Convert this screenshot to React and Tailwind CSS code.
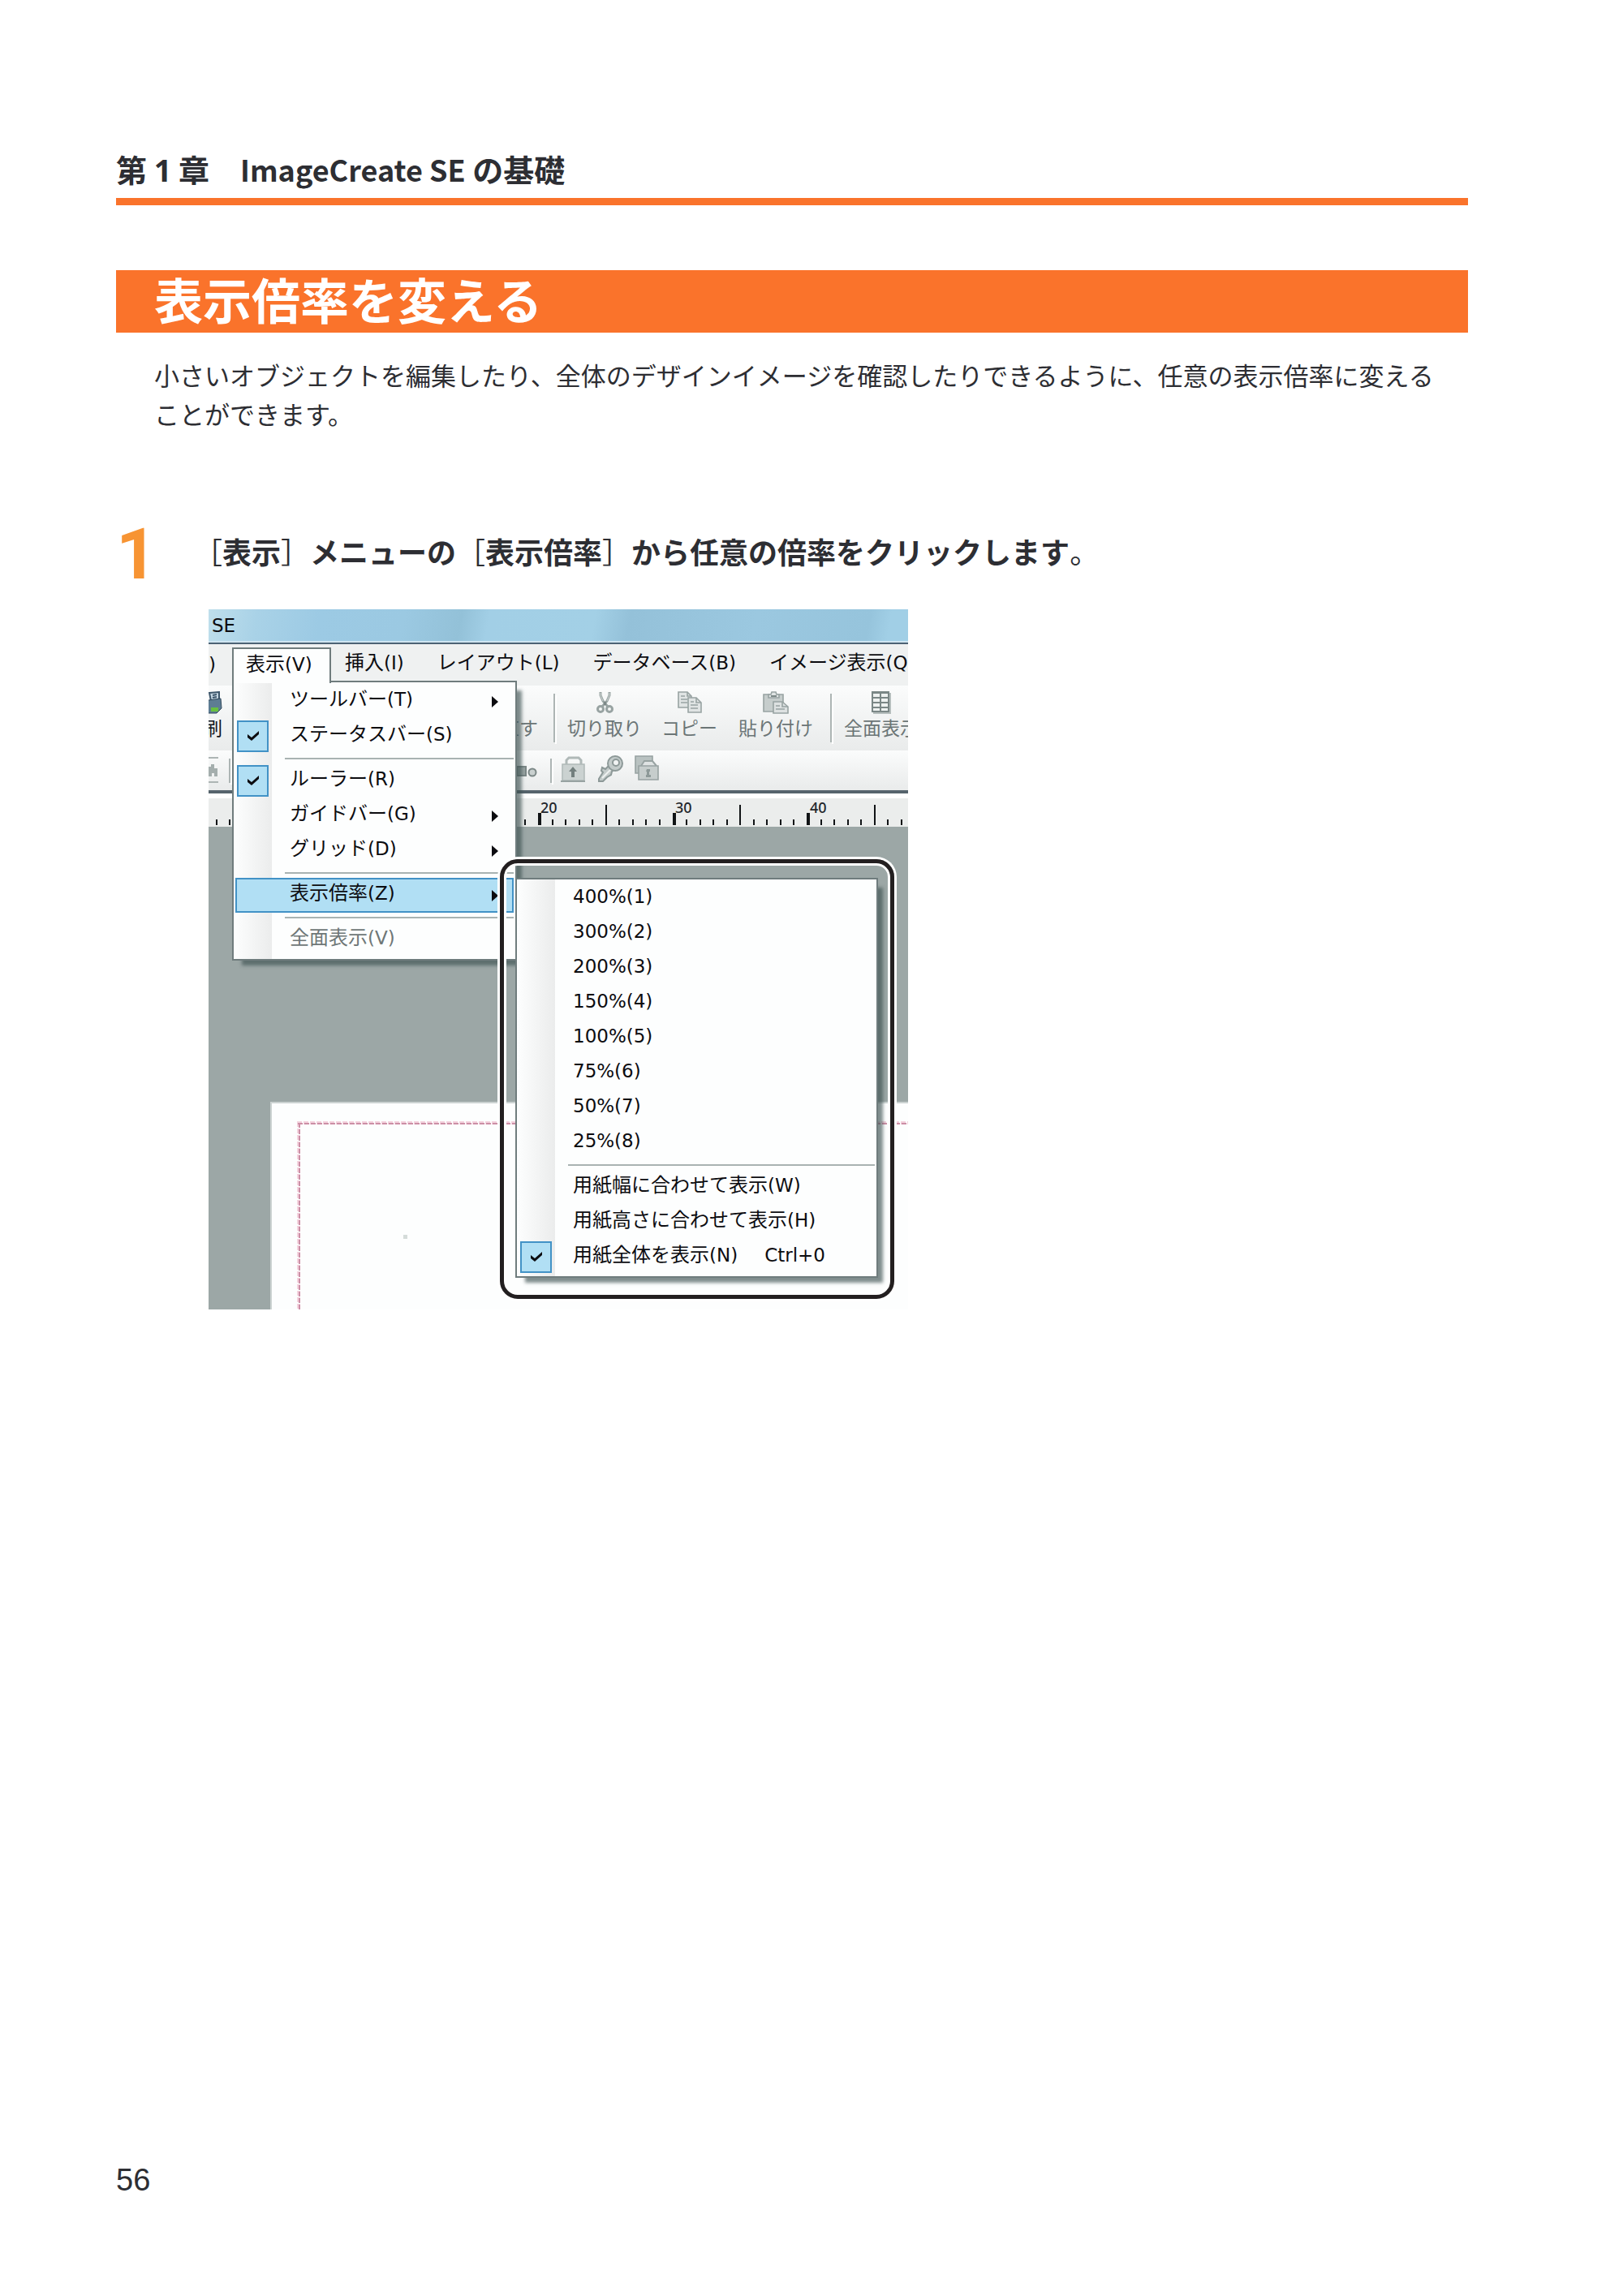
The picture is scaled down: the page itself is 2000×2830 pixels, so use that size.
import clsx from 'clsx'

const RULER_TICKS = Array.from({ length: 54 }, (_, i) => i - 24)
const RULER_LABELS = [
  { value: 20, x: 409 },
  { value: 30, x: 575 },
  { value: 40, x: 741 },
]

const VIEW_MENU = [
  { label: 'ツールバー', accel: '(T)', submenu: true },
  { label: 'ステータスバー', accel: '(S)', checked: true },
  { separator: true },
  { label: 'ルーラー', accel: '(R)', checked: true },
  { label: 'ガイドバー', accel: '(G)', submenu: true },
  { label: 'グリッド', accel: '(D)', submenu: true },
  { separator: true },
  { label: '表示倍率', accel: '(Z)', submenu: true, active: true },
  { separator: true },
  { label: '全面表示', accel: '(V)', disabled: true },
]

const ZOOM_MENU = [
  { accel: '400%(1)' },
  { accel: '300%(2)' },
  { accel: '200%(3)' },
  { accel: '150%(4)' },
  { accel: '100%(5)' },
  { accel: '75%(6)' },
  { accel: '50%(7)' },
  { accel: '25%(8)' },
  { separator: true },
  { label: '用紙幅に合わせて表示', accel: '(W)' },
  { label: '用紙高さに合わせて表示', accel: '(H)' },
  { label: '用紙全体を表示', accel: '(N)', checked: true, shortcut: 'Ctrl+0' },
]

function MenuText({ label, accel }) {
  return (
    <span className="whitespace-nowrap text-[24px] leading-[36px]">
      {label}
      <span className="text-[23px]">{accel}</span>
    </span>
  )
}

function MenuItem({ item }) {
  if (item.separator) {
    return <div role="separator" className="my-[5px] ml-[63px] mr-[2px] h-[2px] bg-[#a9b3b2]" />
  }

  if (item.checked) {
    return (
      <label className="mx-[2px] flex h-[43px] items-center text-[#0c0c10]">
        <span className="ml-[2px] mr-[26px] grid place-items-center">
          <input
            type="checkbox"
            defaultChecked
            className="col-start-1 row-start-1 size-[39px] appearance-none border-2 border-[#4292c6] bg-[#b1dff4]"
          />
          <svg viewBox="0 0 16 14" className="pointer-events-none col-start-1 row-start-1 mb-[2px] h-[14px] w-[16px]">
            <path d="M1 5v4l5 4 9-8V1L6 9z" fill="#0c0c10" />
          </svg>
        </span>
        <span className="flex pb-[5px]">
          <MenuText label={item.label} accel={item.accel} />
          {item.shortcut && <span className="ml-[33px] text-[23px] leading-[36px]">{item.shortcut}</span>}
        </span>
      </label>
    )
  }

  return (
    <button
      type="button"
      disabled={item.disabled}
      className={clsx(
        'mx-[2px] flex h-[43px] items-center border-2 pl-[65px] pr-[17px] text-left',
        item.active ? 'border-[#4292c6] bg-[#b1dff4]' : 'border-transparent',
        item.disabled ? 'text-[#6f7777]' : 'text-[#0c0c10]',
      )}
    >
      <span className="flex pb-[5px]">
        <MenuText label={item.label} accel={item.accel} />
      </span>
      {item.submenu && (
        <svg viewBox="0 0 8 14" className="ml-auto h-[14px] w-[8px]">
          <path d="M0 0l8 7-8 7z" fill="#0c0c10" />
        </svg>
      )}
    </button>
  )
}

function Menu({ items, className }) {
  return (
    <div
      className={clsx(
        'absolute flex flex-col border-2 border-[#6f7c7d] bg-[#fdfefe] bg-[linear-gradient(to_right,#fdfefe,#f3f4f4_26px,#ebecec_47px,#fdfefe_47px)] pt-[2px] pb-[2px] shadow-[9px_9px_4px_-3px_rgba(60,80,80,0.65)]',
        className,
      )}
    >
      {items.map((item, i) => (
        <MenuItem key={i} item={item} />
      ))}
    </div>
  )
}

function PrintIcon() {
  return (
    <svg viewBox="0 0 28 28" className="size-[28px] shrink-0">
      <path d="M12 2l12-1v9l-10 2z" fill="#c5d6e2" stroke="#3d566b" strokeWidth="2" />
      <path d="M16 5l5-1M16 8l5-1" stroke="#3d566b" strokeWidth="2" />
      <path d="M4 12l22-3 1 12-6 6H6z" fill="#5e7d93" stroke="#32495c" strokeWidth="1" />
      <path d="M14 20h9v5h-9z" fill="#68c13f" />
    </svg>
  )
}

function CutIcon() {
  return (
    <svg viewBox="0 0 28 28" className="size-[28px]" fill="none" stroke="#98a3a2">
      <path d="M9 1v4l3 7 6 7M20 1v4l-3 7-6 7" strokeWidth="3" />
      <path d="M9 2v3l3 7M20 2v3l-3 7" stroke="#cdd4d3" strokeWidth="1" />
      <circle cx="9" cy="22" r="3.5" fill="#f4f6f5" strokeWidth="3" />
      <circle cx="20" cy="22" r="3.5" fill="#f4f6f5" strokeWidth="3" />
      <path d="M13 13h3v4h-3z" fill="#7d8988" stroke="none" />
    </svg>
  )
}

function CopyIcon() {
  return (
    <svg viewBox="0 0 30 28" className="h-[28px] w-[30px]" fill="#e0e4e4" stroke="#98a3a2" strokeWidth="1.6">
      <path d="M1 1h11l5 5v14H1z" />
      <path d="M12 1v5h5M4 6h5M4 10h8M4 14h8" fill="none" />
      <path d="M13 8h10l6 6v12H13z" />
      <path d="M23 8v6h6M16 13h4M16 17h9M16 21h9" fill="none" />
    </svg>
  )
}

function PasteIcon() {
  return (
    <svg viewBox="0 0 32 28" className="h-[28px] w-[32px]" stroke="#98a3a2" strokeWidth="1.6">
      <path d="M1 4h24v21H1z" fill="#c6cdcc" />
      <path d="M7 8V4h3l1-3h5l1 3h3v4z" fill="#e0e4e4" />
      <path d="M10 6h7" stroke="#7d8988" strokeWidth="2" />
      <path d="M13 13h11l7 6v8H13z" fill="#dde1e1" />
      <path d="M24 13v6h7M16 18h5M16 22h11" fill="none" />
    </svg>
  )
}

function TilesIcon() {
  return (
    <svg viewBox="0 0 24 28" className="h-[28px] w-[24px]">
      <path d="M2 2h22v26H2z" fill="#b5bdbc" />
      <path d="M0 0h22v26H0z" fill="#7b8786" />
      <path d="M2 3h8v4H2zM12 3h8v4h-8zM2 9h8v4H2zM12 9h8v4h-8zM2 15h8v4H2zM12 15h8v4h-8zM2 21h8v3H2zM12 21h8v3h-8z" fill="#eef1f0" />
    </svg>
  )
}

function LockIcon() {
  return (
    <svg viewBox="0 0 32 34" className="h-[34px] w-[32px]">
      <path d="M8 12V6l3-3h12l3 3v6" fill="none" stroke="#b0b9b8" strokeWidth="3" />
      <path d="M3 11h27v20H3z" fill="#cbd2d1" stroke="#b0b9b8" strokeWidth="1.5" />
      <path d="M1 32h30" stroke="#98a3a2" strokeWidth="2" />
      <path d="M16 14l5 6h-3v7h-4v-7h-3z" fill="#737f7e" />
    </svg>
  )
}

function KeyIcon() {
  return (
    <svg viewBox="0 0 34 34" className="size-[34px]">
      <path d="M17 11L11 17l-4-2-1 4 2 2-5 8v3h5l5-5 5-3 1-4 5-4z" fill="#c3cbca" stroke="#8d9998" strokeWidth="2" />
      <path d="M7 28l13-13" stroke="#eef1f0" strokeWidth="2" />
      <circle cx="23" cy="10" r="9" fill="#c3cbca" stroke="#8d9998" strokeWidth="2" />
      <circle cx="24" cy="9" r="4" fill="#f2f4f4" stroke="#8d9998" strokeWidth="2" />
    </svg>
  )
}

function LockAllIcon() {
  return (
    <svg viewBox="0 0 30 32" className="h-[32px] w-[30px]" stroke="#98a3a2" strokeWidth="1.6">
      <path d="M1 1h21v21H1z" fill="#b9c2c1" />
      <path d="M8 13l4-6h10l5 6" fill="#dfe3e3" strokeWidth="2" />
      <path d="M5 13h24v17H5z" fill="#c6cdcc" />
      <path d="M15 17h4v3h-1v4h2v3h-6v-3h1v-4h-1z" fill="#8d9998" stroke="none" />
    </svg>
  )
}

function ToolButton({ icon, label, className }) {
  return (
    <button type="button" className={clsx('flex shrink-0 flex-col items-center whitespace-nowrap text-[23px] leading-[36px] text-[#6b7576]', className)}>
      {icon}
      {label}
    </button>
  )
}

function Divider({ className }) {
  return <span className={clsx('w-[2px] shrink-0 bg-[#adb5b4] shadow-[2px_2px_0_#ffffff]', className)} />
}

function Ruler() {
  return (
    <svg className="block h-[35px] w-full bg-[#ebedec]">
      {RULER_TICKS.map((i) => {
        const major = i % 10 === 0
        const half = !major && i % 5 === 0
        const top = major ? 18 : half ? 8 : 26
        return <rect key={i} x={Math.round(406 + i * 16.55)} y={top} width={major ? 4 : 2} height={33 - top} fill="#111416" />
      })}
      {RULER_LABELS.map((label) => (
        <text key={label.value} x={label.x} y="18" fill="#22262b" className="font-['Noto_Sans',sans-serif] text-[18px] font-medium">
          {label.value}
        </text>
      ))}
    </svg>
  )
}

function AppWindow() {
  return (
    <div className="relative h-[863px] w-[862px] overflow-hidden bg-[#9ca7a6] font-['DejaVu_Sans','Noto_Sans_CJK_JP',sans-serif] text-[#0c0c10]">
      {/* Title bar */}
      <div className="h-[41px] border-b-2 border-[#cfe5f1] bg-[linear-gradient(100deg,#bfdfec,#a9d2e7_7%,#9ccae4_16%,#9bc9e2_28%,#93c1d8_36%,#a2cfe6_40%,#a3d0e6_55%,#94c1d9_60%,#9bc8e0_78%,#96c4dc_94%,#a1cfe6_97%)] pl-[4px] text-[23px] leading-[40px]">
        SE
      </div>

      {/* Menu bar */}
      <div className="flex h-[53px] items-start border-t-2 border-[#4c6274] bg-[#eff1f1] pt-[4px] leading-[40px]">
        <button type="button" className="flex h-[42px] w-[29px] shrink-0 items-center">
          <MenuText accel=")" />
        </button>
        <button type="button" className="relative z-20 flex h-[44px] w-[122px] shrink-0 items-center border-2 border-b-0 border-[#6f7c7d] bg-[#fdfefe] pb-[4px] pl-[15px]">
          <MenuText label="表示" accel="(V)" />
        </button>
        <div className="flex h-[42px] items-center gap-[41px] pl-[17px]">
          <button type="button"><MenuText label="挿入" accel="(I)" /></button>
          <button type="button"><MenuText label="レイアウト" accel="(L)" /></button>
          <button type="button"><MenuText label="データベース" accel="(B)" /></button>
          <button type="button"><MenuText label="イメージ表示" accel="(Q)" /></button>
        </div>
      </div>

      {/* Main toolbar */}
      <div className="flex h-[80px] items-start bg-linear-to-b from-[#fbfcfc] to-[#e9ebeb] pt-[7px]">
        <ToolButton icon={<PrintIcon />} label="印刷" className="-ml-[29px] items-end text-[#10131a]" />
        <ToolButton label="やり直す" className="ml-[297px] pt-[28px]" />
        <Divider className="ml-[19px] mt-[3px] h-[60px]" />
        <ToolButton icon={<CutIcon />} label="切り取り" className="ml-[15px]" />
        <ToolButton icon={<CopyIcon />} label="コピー" className="ml-[24px]" />
        <ToolButton icon={<PasteIcon />} label="貼り付け" className="ml-[26px]" />
        <Divider className="ml-[21px] mt-[3px] h-[60px]" />
        <ToolButton icon={<TilesIcon />} label="全面表示" className="ml-[15px]" />
      </div>

      {/* Object toolbar */}
      <div className="flex h-[53px] items-start border-b-4 border-[#56646c] bg-linear-to-b from-[#fbfcfc] to-[#e9ebeb] pt-[6px]">
        <svg viewBox="0 0 12 34" className="h-[34px] w-[12px] shrink-0">
          <path d="M0 3h12M0 33h12" stroke="#adb5b4" strokeWidth="2" />
          <path d="M0 14h3v-3h4v5h4v10H7v-4H4v4H0z" fill="#a4aead" />
        </svg>
        <Divider className="ml-[13px] mt-[4px] h-[30px]" />
        <svg viewBox="0 0 26 14" className="ml-[352px] mt-[13px] h-[14px] w-[26px] shrink-0" stroke="#7b8786" strokeWidth="2">
          <path d="M1 1h11v11H1z" fill="#98a3a2" />
          <circle cx="20" cy="8" r="4.5" fill="#c9d0cf" />
        </svg>
        <Divider className="ml-[16px] mt-[4px] h-[30px]" />
        <div className="flex items-start gap-[13px] pl-[10px]">
          <LockIcon />
          <KeyIcon />
          <LockAllIcon />
        </div>
      </div>

      <div className="border-t-6 border-white">
        <Ruler />
      </div>

      {/* Paper with its margin guide */}
      <div className="mt-[339px] ml-[76px] h-[300px] border-t-2 border-l-2 border-[#ccd3d2] bg-[#fdfefe] pt-[22px] pl-[30px]">
        <svg className="block h-[276px] w-full" fill="none">
          <path d="M1 2H800M3 1V276" stroke="#f4d3de" strokeWidth="4" strokeDasharray="6 2" />
          <path d="M2 3H800M4 2V276" stroke="#cc8fa6" strokeWidth="2" strokeDasharray="6 2" />
          <rect x="132" y="140" width="5" height="5" fill="#d5dcda" />
        </svg>
      </div>

      <Menu items={VIEW_MENU} className="left-[29px] top-[88px] z-10 w-[351px]" />
      <Menu items={ZOOM_MENU} className="left-[378px] top-[331px] z-10 w-[447px]" />

      {/* Callout frame round the zoom menu */}
      <div className="pointer-events-none absolute left-[359px] top-[308px] z-20 h-[542px] w-[486px] rounded-[22px] border-[5px] border-[#231f20] shadow-[0_0_0_3px_#ffffff,inset_0_0_0_3px_#ffffff]" />
    </div>
  )
}

function App() {
  return (
    <div className="flex min-h-screen flex-col bg-white pl-[143px] pr-[191px] pt-[184px] pb-[123px] font-['Noto_Sans_CJK_JP',sans-serif] text-[#2d2e33]">
      <header className="border-b-9 border-[#fa732b] pb-[11px]">
        <p className="text-[38px] font-bold leading-[48px]">
          第 <span className="font-['Open_Sans',sans-serif]">1</span> 章　<span className="text-[36px]">ImageCreate SE</span> の基礎
        </p>
      </header>

      <main>
        <h1 className="mt-[80px] flex h-[77px] items-center bg-[#fa732b] pb-[8px] pl-[47px] text-[60px] font-bold leading-[69px] text-white">
          表示倍率を変える
        </h1>
        <p className="mt-[28px] pl-[47px] text-[31px] leading-[48px]">
          小さいオブジェクトを編集したり、全体のデザインイメージを確認したりできるように、任意の表示倍率に変える<br />
          ことができます。
        </p>

        <section className="mt-[101px]">
          <div className="flex h-[88px] items-center">
            <span className="w-[95px] pt-[8px] font-['Roboto',sans-serif] text-[88px] font-bold leading-[88px] text-[#f79433]">1</span>
            <h2 className="text-[36px] font-bold leading-[48px]">
              <span className="font-normal">［</span>表示<span className="font-normal">］</span>メニューの
              <span className="font-normal">［</span>表示倍率<span className="font-normal">］</span>から任意の倍率をクリックします<span className="font-normal">。</span>
            </h2>
          </div>
          <div className="ml-[114px] mt-[28px]">
            <AppWindow />
          </div>
        </section>
      </main>

      <footer className="mt-auto font-['Liberation_Sans',sans-serif] text-[38px] leading-[40px]">56</footer>
    </div>
  )
}

export default App
